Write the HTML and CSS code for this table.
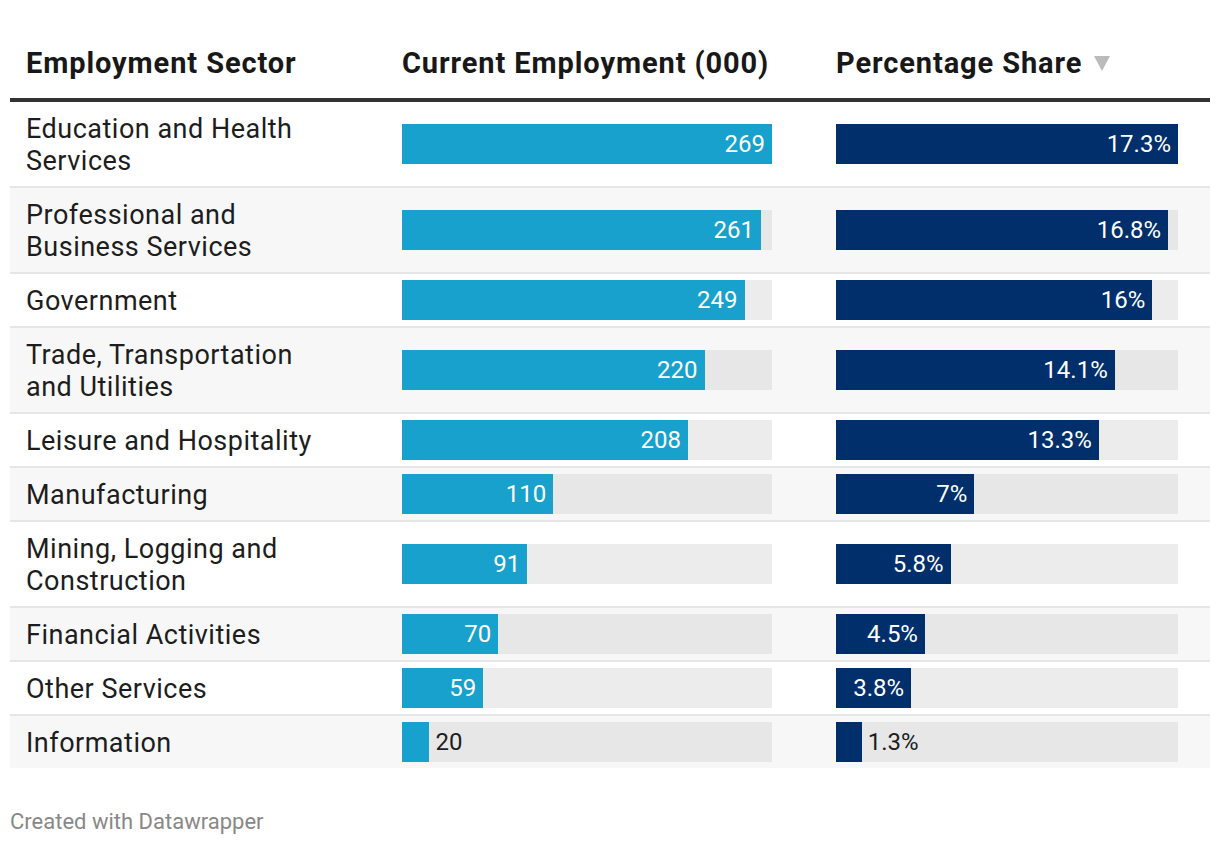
FILE: index.html
```html
<!DOCTYPE html>
<html lang="en">
<head>
<meta charset="utf-8">
<title>Employment by Sector</title>
<link rel="stylesheet" href="styles.css">
</head>
<body>
<div class="chart">
  <table class="dw-table">
    <colgroup>
      <col class="c1"><col class="c2"><col class="c3">
    </colgroup>
    <thead>
      <tr>
        <th>Employment Sector</th>
        <th>Current Employment (000)</th>
        <th>Percentage Share<span class="sort"></span></th>
      </tr>
    </thead>
    <tbody>
      <tr>
        <td class="name">Education and Health<br>Services</td>
        <td class="bar"><div class="track t1"><div class="fill blue" style="width:100%"><span>269</span></div></div></td>
        <td class="bar"><div class="track t2"><div class="fill navy" style="width:100%"><span>17.3%</span></div></div></td>
      </tr>
      <tr>
        <td class="name">Professional and<br>Business Services</td>
        <td class="bar"><div class="track t1"><div class="fill blue" style="width:97.03%"><span>261</span></div></div></td>
        <td class="bar"><div class="track t2"><div class="fill navy" style="width:97.11%"><span>16.8%</span></div></div></td>
      </tr>
      <tr>
        <td class="name">Government</td>
        <td class="bar"><div class="track t1"><div class="fill blue" style="width:92.57%"><span>249</span></div></div></td>
        <td class="bar"><div class="track t2"><div class="fill navy" style="width:92.49%"><span>16%</span></div></div></td>
      </tr>
      <tr>
        <td class="name">Trade, Transportation<br>and Utilities</td>
        <td class="bar"><div class="track t1"><div class="fill blue" style="width:81.78%"><span>220</span></div></div></td>
        <td class="bar"><div class="track t2"><div class="fill navy" style="width:81.50%"><span>14.1%</span></div></div></td>
      </tr>
      <tr>
        <td class="name">Leisure and Hospitality</td>
        <td class="bar"><div class="track t1"><div class="fill blue" style="width:77.32%"><span>208</span></div></div></td>
        <td class="bar"><div class="track t2"><div class="fill navy" style="width:76.88%"><span>13.3%</span></div></div></td>
      </tr>
      <tr>
        <td class="name">Manufacturing</td>
        <td class="bar"><div class="track t1"><div class="fill blue" style="width:40.89%"><span>110</span></div></div></td>
        <td class="bar"><div class="track t2"><div class="fill navy" style="width:40.46%"><span>7%</span></div></div></td>
      </tr>
      <tr>
        <td class="name">Mining, Logging and<br>Construction</td>
        <td class="bar"><div class="track t1"><div class="fill blue" style="width:33.83%"><span>91</span></div></div></td>
        <td class="bar"><div class="track t2"><div class="fill navy" style="width:33.53%"><span>5.8%</span></div></div></td>
      </tr>
      <tr>
        <td class="name">Financial Activities</td>
        <td class="bar"><div class="track t1"><div class="fill blue" style="width:26.02%"><span>70</span></div></div></td>
        <td class="bar"><div class="track t2"><div class="fill navy" style="width:26.01%"><span>4.5%</span></div></div></td>
      </tr>
      <tr>
        <td class="name">Other Services</td>
        <td class="bar"><div class="track t1"><div class="fill blue" style="width:21.93%"><span>59</span></div></div></td>
        <td class="bar"><div class="track t2"><div class="fill navy" style="width:21.97%"><span>3.8%</span></div></div></td>
      </tr>
      <tr>
        <td class="name">Information</td>
        <td class="bar"><div class="track t1"><div class="fill blue" style="width:7.43%"></div><span class="outside">20</span></div></td>
        <td class="bar"><div class="track t2"><div class="fill navy" style="width:7.51%"></div><span class="outside">1.3%</span></div></td>
      </tr>
    </tbody>
  </table>
  <div class="footer">Created with Datawrapper</div>
</div>
</body>
</html>
```

FILE: styles.css
```css
html, body {
  margin: 0;
  padding: 0;
  background: #ffffff;
}

body {
  font-family: Roboto, "Liberation Sans", Arial, sans-serif;
  color: #1d1d1d;
}

.chart {
  padding: 10px 10px 0 10px;
}

.dw-table {
  width: 1200px;
  table-layout: fixed;
  border-collapse: collapse;
  border-spacing: 0;
}

.c1 { width: 376px; }
.c2 { width: 434px; }
.c3 { width: 390px; }

.dw-table th {
  text-align: left;
  font-weight: 700;
  font-size: 29px;
  letter-spacing: 0.9px;
  line-height: 32px;
  color: #181818;
  height: 90px;
  padding: 0 0 19px 16px;
  vertical-align: bottom;
  border-bottom: 4px solid #333333;
  box-sizing: border-box;
  white-space: nowrap;
}

.sort {
  display: inline-block;
  width: 0;
  height: 0;
  border-left: 8.5px solid transparent;
  border-right: 8.5px solid transparent;
  border-top: 15px solid #bbbbbb;
  margin-left: 12px;
  vertical-align: 2px;
}

.dw-table td {
  padding: 11px 0 9px 16px;
  vertical-align: middle;
  border-bottom: 2px solid #e6e6e6;
}

.dw-table td.name {
  font-size: 27px;
  letter-spacing: 0.5px;
  line-height: 32px;
}

.dw-table td.bar {
  padding-top: 0;
  padding-bottom: 0;
}

.dw-table tbody tr:nth-child(even) td {
  background: #f7f7f7;
}

.dw-table tbody tr:last-child td {
  border-bottom: none;
}

.track {
  display: flex;
  align-items: center;
  height: 40px;
  background: #ececec;
}

.dw-table tbody tr:nth-child(even) .track {
  background: #e7e7e7;
}

.t1 { width: 370px; }
.t2 { width: 342px; }

.fill {
  height: 40px;
  display: flex;
  align-items: center;
  justify-content: flex-end;
  flex: none;
}

.fill span {
  color: #ffffff;
  font-size: 24px;
  padding-right: 7px;
  white-space: nowrap;
}

.blue { background: #18a1cd; }
.navy { background: #002f6c; }

.outside {
  font-size: 24px;
  color: #1d1d1d;
  padding-left: 6px;
}

.footer {
  margin-top: 40px;
  font-size: 22px;
  line-height: 28px;
  color: #888888;
}
```
